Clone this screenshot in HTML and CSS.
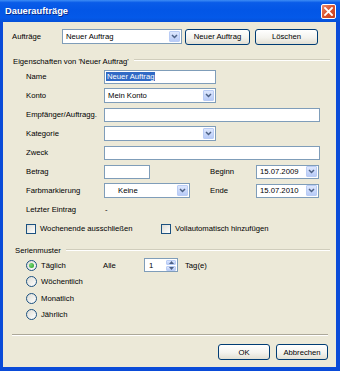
FILE: index.html
```html
<!DOCTYPE html>
<html lang="de">
<head>
    <meta charset="UTF-8">
    <title>Daueraufträge</title>
    <link rel="stylesheet" href="styles.css">
</head>
<body>

    <div class="window">
        <div class="titlebar">
            <span class="title">Daueraufträge</span>
            <span class="close">
                <svg width="9" height="9" viewBox="0 0 9 9"><path d="M1 1 L8 8 M8 1 L1 8" stroke="#fff" stroke-width="1.8" stroke-linecap="square"/></svg>
            </span>
        </div>

        <div class="frame">
            <div class="toprow">
                <span class="toplabel">Aufträge</span>
                <div class="combo w120">
                    <span>Neuer Auftrag</span>
                    <span class="arrow"><svg width="7" height="5" viewBox="0 0 7 5"><path d="M1 1 L3.5 3.5 L6 1" fill="none" stroke="#4D6185" stroke-width="1.5"/></svg></span>
                </div>
                <button class="btn newBtn">Neuer Auftrag</button>
                <button class="btn delBtn">Löschen</button>
            </div>

            <div class="group">
                <span>Eigenschaften von 'Neuer Auftrag'</span>
                <i class="rule"></i>
            </div>

            <div class="row">
                <span class="lbl">Name</span>
                <div class="field w112"><span class="selected">Neuer Auftrag</span></div>
            </div>
            <div class="row">
                <span class="lbl">Konto</span>
                <div class="combo w112">
                    <span>Mein Konto</span>
                    <span class="arrow"><svg width="7" height="5" viewBox="0 0 7 5"><path d="M1 1 L3.5 3.5 L6 1" fill="none" stroke="#4D6185" stroke-width="1.5"/></svg></span>
                </div>
            </div>
            <div class="row">
                <span class="lbl">Empfänger/Auftragg.</span>
                <div class="field w216"></div>
            </div>
            <div class="row">
                <span class="lbl">Kategorie</span>
                <div class="combo w112">
                    <span></span>
                    <span class="arrow"><svg width="7" height="5" viewBox="0 0 7 5"><path d="M1 1 L3.5 3.5 L6 1" fill="none" stroke="#4D6185" stroke-width="1.5"/></svg></span>
                </div>
            </div>
            <div class="row">
                <span class="lbl">Zweck</span>
                <div class="field w216"></div>
            </div>
            <div class="row">
                <span class="lbl">Betrag</span>
                <div class="field w46"></div>
                <span class="lbl2 gapBetrag">Beginn</span>
                <div class="combo date">
                    <span>15.07.2009</span>
                    <span class="arrow"><svg width="7" height="5" viewBox="0 0 7 5"><path d="M1 1 L3.5 3.5 L6 1" fill="none" stroke="#4D6185" stroke-width="1.5"/></svg></span>
                </div>
            </div>
            <div class="row">
                <span class="lbl">Farbmarkierung</span>
                <div class="combo w86 keine">
                    <span>Keine</span>
                    <span class="arrow"><svg width="7" height="5" viewBox="0 0 7 5"><path d="M1 1 L3.5 3.5 L6 1" fill="none" stroke="#4D6185" stroke-width="1.5"/></svg></span>
                </div>
                <span class="lbl2 gapFarbe">Ende</span>
                <div class="combo date">
                    <span>15.07.2010</span>
                    <span class="arrow"><svg width="7" height="5" viewBox="0 0 7 5"><path d="M1 1 L3.5 3.5 L6 1" fill="none" stroke="#4D6185" stroke-width="1.5"/></svg></span>
                </div>
            </div>
            <div class="row">
                <span class="lbl">Letzter Eintrag</span>
                <span class="dash">-</span>
            </div>
            <div class="row">
                <label class="option firstCheck"><span class="check"></span>Wochenende ausschließen</label>
                <label class="option"><span class="check"></span>Vollautomatisch hinzufügen</label>
            </div>

            <div class="group group2">
                <span>Serienmuster</span>
                <i class="rule"></i>
            </div>

            <div class="radioRow">
                <label class="option firstRadio"><span class="radio on"></span>Täglich</label>
                <span class="alle">Alle</span>
                <div class="spin">
                    <span>1</span>
                    <span class="spinArrows">
                        <span class="up"><svg width="5" height="3" viewBox="0 0 5 3"><path d="M0 3 L2.5 0 L5 3 Z" fill="#4D6185"/></svg></span>
                        <span class="down"><svg width="5" height="3" viewBox="0 0 5 3"><path d="M0 0 L2.5 3 L5 0 Z" fill="#4D6185"/></svg></span>
                    </span>
                </div>
                <span class="tage">Tag(e)</span>
            </div>
            <div class="radioRow">
                <label class="option"><span class="radio"></span>Wöchentlich</label>
            </div>
            <div class="radioRow">
                <label class="option"><span class="radio"></span>Monatlich</label>
            </div>
            <div class="radioRow">
                <label class="option"><span class="radio"></span>Jährlich</label>
            </div>

            <div class="separator"></div>

            <div class="buttonRow">
                <button class="btn dlgBtn">OK</button>
                <button class="btn dlgBtn">Abbrechen</button>
            </div>
        </div>
    </div>

</body>
</html>
```

FILE: styles.css
```css
* {
    box-sizing: border-box;
}
body {
    margin: 0;
    background: #fff;
    font-family: "Liberation Sans", Arial, sans-serif;
    font-size: 7.7px;
    color: #000;
}
.window {
    width: 340px;
    height: 371px;
    display: flex;
    flex-direction: column;
}
.titlebar {
    height: 22px;
    flex: none;
    display: flex;
    align-items: center;
    justify-content: space-between;
    padding: 0 4px 0 5px;
    background: linear-gradient(#3D8DF5 0, #0A5CE8 12%, #0356E6 45%, #0459E9 80%, #0550D8 100%);
}
.title {
    color: #fff;
    font-weight: bold;
    font-size: 9.3px;
    text-shadow: 1px 1px 0 #0A2C8C;
}
.close {
    width: 15px;
    height: 15px;
    border: 1px solid #fff;
    border-radius: 2px;
    background: linear-gradient(135deg, #EC8A6C, #D9532E 50%, #C2401E);
    display: flex;
    align-items: center;
    justify-content: center;
}
.frame {
    flex: 1;
    background: #ECE9D8;
    border-style: solid;
    border-color: #0A4BD8;
    border-width: 0 4px 4px 3px;
    padding: 6px 0 7px;
    display: flex;
    flex-direction: column;
}
.toprow {
    height: 17px;
    display: flex;
    align-items: center;
    padding-left: 9px;
}
.toplabel {
    width: 50px;
}
.combo {
    height: 15px;
    border: 1px solid #7F9DB9;
    background: #fff;
    display: flex;
    align-items: center;
    justify-content: space-between;
    padding: 0 1px 0 3px;
}
.arrow {
    width: 11px;
    height: 11px;
    border: 1px solid #B9CCF5;
    border-radius: 1px;
    background: linear-gradient(#DDE7FD, #B8CBF7);
    display: flex;
    align-items: center;
    justify-content: center;
}
.btn {
    height: 16px;
    padding: 0;
    border: 1px solid #003C74;
    border-radius: 3px;
    background: linear-gradient(#FFFFFF, #F4F3EE 55%, #E2DFD3);
    font: inherit;
    color: #000;
}
.newBtn {
    width: 65px;
    margin-left: 3px;
}
.delBtn {
    width: 63px;
    margin-left: 5px;
}
.group {
    height: 12px;
    margin-top: 10px;
    padding: 0 6px 0 10px;
    display: flex;
    align-items: center;
}
.group2 {
    height: 13px;
    margin-top: 6px;
    padding-left: 12px;
}
.rule {
    flex: 1;
    height: 2px;
    margin-left: 5px;
    margin-top: -2px;
    border-top: 1px solid #D0CDBC;
    border-bottom: 1px solid #fff;
}
.row {
    height: 19px;
    display: flex;
    align-items: center;
    padding-left: 23px;
}
.lbl {
    width: 78px;
    flex: none;
}
.field {
    height: 14px;
    border: 1px solid #7F9DB9;
    background: #fff;
    display: flex;
    align-items: center;
    padding-left: 1px;
}
.selected {
    background: #316AC5;
    color: #fff;
    padding: 0 1px;
}
.w120 { width: 120px; }
.w112 { width: 112px; }
.w216 { width: 216px; }
.w86 { width: 86px; }
.w46 { width: 46px; }
.keine {
    padding-left: 13px;
}
.date {
    width: 63px;
    height: 14px;
}
.lbl2 {
    width: 46px;
}
.gapBetrag {
    margin-left: 60px;
}
.gapFarbe {
    margin-left: 20px;
}
.dash {
    padding-left: 1px;
}
.option {
    display: flex;
    align-items: center;
}
.firstCheck {
    width: 135px;
}
.check {
    width: 10px;
    height: 10px;
    margin-right: 4px;
    border: 1px solid #1C5180;
    background: linear-gradient(135deg, #DCDCD5, #FFFFFF);
}
.radioRow {
    height: 16.5px;
    display: flex;
    align-items: center;
    padding-left: 23px;
}
.firstRadio {
    width: 77px;
}
.radio {
    position: relative;
    width: 11px;
    height: 11px;
    margin-right: 4px;
    border: 1px solid #1C5180;
    border-radius: 50%;
    background: linear-gradient(135deg, #DCDCD5, #FFFFFF);
}
.radio.on::after {
    content: "";
    position: absolute;
    left: 2px;
    top: 2px;
    width: 5px;
    height: 5px;
    border-radius: 50%;
    background: radial-gradient(circle at 35% 35%, #7BD77B, #21A121);
}
.alle {
    width: 41px;
}
.spin {
    width: 34px;
    height: 14px;
    border: 1px solid #7F9DB9;
    background: #fff;
    display: flex;
    align-items: center;
    justify-content: space-between;
    padding: 0 1px 0 4px;
}
.spinArrows {
    width: 10px;
    height: 11px;
    display: flex;
    flex-direction: column;
    gap: 1px;
}
.spinArrows span {
    flex: 1;
    border: 1px solid #B9CCF5;
    border-radius: 1px;
    background: linear-gradient(#DDE7FD, #B8CBF7);
    display: flex;
    align-items: center;
    justify-content: center;
}
.tage {
    margin-left: 7px;
}
.separator {
    height: 2px;
    margin: 11px 8px 0 9px;
    border-top: 1px solid #ACA899;
    border-bottom: 1px solid #fff;
}
.buttonRow {
    margin-top: 8px;
    padding-right: 8px;
    display: flex;
    justify-content: flex-end;
    gap: 6px;
}
.dlgBtn {
    width: 52px;
}
```
